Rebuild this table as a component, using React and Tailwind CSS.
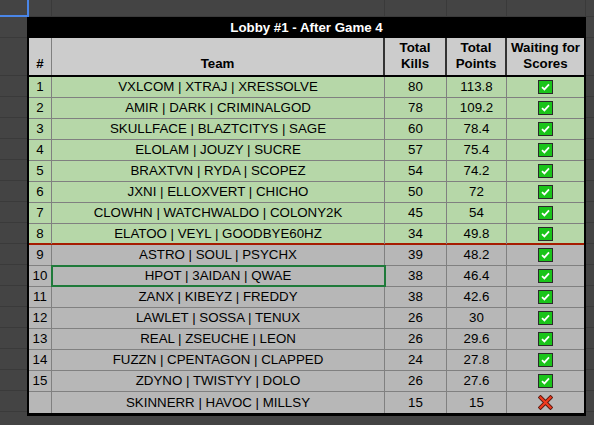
import React from 'react';

const rows = [
  { rank: '1', team: 'VXLCOM | XTRAJ | XRESSOLVE', kills: 80, points: 113.8, ok: true },
  { rank: '2', team: 'AMIR | DARK | CRIMINALGOD', kills: 78, points: 109.2, ok: true },
  { rank: '3', team: 'SKULLFACE | BLAZTCITYS | SAGE', kills: 60, points: 78.4, ok: true },
  { rank: '4', team: 'ELOLAM | JOUZY | SUCRE', kills: 57, points: 75.4, ok: true },
  { rank: '5', team: 'BRAXTVN | RYDA | SCOPEZ', kills: 54, points: 74.2, ok: true },
  { rank: '6', team: 'JXNI | ELLOXVERT | CHICHO', kills: 50, points: 72, ok: true },
  { rank: '7', team: 'CLOWHN | WATCHWALDO | COLONY2K', kills: 45, points: 54, ok: true },
  { rank: '8', team: 'ELATOO | VEYL | GOODBYE60HZ', kills: 34, points: 49.8, ok: true },
  { rank: '9', team: 'ASTRO | SOUL | PSYCHX', kills: 39, points: 48.2, ok: true },
  { rank: '10', team: 'HPOT | 3AIDAN | QWAE', kills: 38, points: 46.4, ok: true },
  { rank: '11', team: 'ZANX | KIBEYZ | FREDDY', kills: 38, points: 42.6, ok: true },
  { rank: '12', team: 'LAWLET | SOSSA | TENUX', kills: 26, points: 30, ok: true },
  { rank: '13', team: 'REAL | ZSEUCHE | LEON', kills: 26, points: 29.6, ok: true },
  { rank: '14', team: 'FUZZN | CPENTAGON | CLAPPED', kills: 24, points: 27.8, ok: true },
  { rank: '15', team: 'ZDYNO | TWISTYY | DOLO', kills: 26, points: 27.6, ok: true },
  { rank: '', team: 'SKINNERR | HAVOC | MILLSY', kills: 15, points: 15, ok: false },
];

const Check = () => (
  <span className="w-[15px] h-[14px] bg-[#1ac41a] border border-[#2a2a2a] flex items-center justify-center">
    <svg width="11" height="10" viewBox="0 0 11 10">
      <path d="M2 5.2 L4.4 7.4 L9 2.4" fill="none" stroke="#fff" strokeWidth="1.8" />
    </svg>
  </span>
);

const Cross = () => (
  <svg width="15" height="15" viewBox="0 0 15 15">
    <path d="M2.5 2.5 L12.5 12.5 M12.5 2.5 L2.5 12.5" stroke="#5a1a10" strokeWidth="4" strokeLinecap="square" />
    <path d="M2.5 2.5 L12.5 12.5 M12.5 2.5 L2.5 12.5" stroke="#f03a1e" strokeWidth="2.2" strokeLinecap="square" />
  </svg>
);

const gutterRows = [21, 38, ...Array(16).fill(21), 21];

const Gutter = ({ className }) => (
  <div className={className}>
    {gutterRows.map((h, i) => (
      <div key={i} style={{ height: h }} className="border-b border-[#3a3a3a]" />
    ))}
  </div>
);

export default function App() {
  return (
    <div className="w-[594px] h-[425px] bg-[#444444] overflow-hidden font-['Liberation_Sans',Arial,sans-serif] text-[13.3px] text-black">
      {/* sheet top row */}
      <div className="flex h-[17px]">
        <div className="w-[29px] h-[17px] border-r-2 border-b-2 border-[#4a86e8]" />
        <div className="w-[23px] border-r border-b border-[#3a3a3a]" />
        <div className="w-[333px] border-r border-b border-[#3a3a3a]" />
        <div className="w-[62px] border-r border-b border-[#3a3a3a]" />
        <div className="w-[60px] border-r border-b border-[#3a3a3a]" />
        <div className="w-[79px] border-r border-b border-[#3a3a3a]" />
        <div className="flex-1 border-b border-[#3a3a3a]" />
      </div>

      <div className="flex">
        <Gutter className="w-[27px] shrink-0" />

        <div className="w-[559px] shrink-0 flex flex-col">
          <div className="h-[21px] bg-black text-white font-bold flex items-center justify-center">
            Lobby #1 - After Game 4
          </div>

          <div className="border-l-2 border-r-2 border-b-[3px] border-black">
            <div className="grid grid-cols-[23px_333px_62px_60px_77px] h-[39px] bg-[#cccccc] border-b-2 border-black font-bold leading-[16px] text-center">
              <div className="border-r border-[#7f7f7f] flex items-end justify-center pb-[3px]">#</div>
              <div className="border-r-2 border-[#333] flex items-end justify-center pb-[3px]">Team</div>
              <div className="border-r-2 border-[#333] flex items-end justify-center pb-[3px]">Total<br />Kills</div>
              <div className="border-r-2 border-[#333] flex items-end justify-center pb-[3px]">Total<br />Points</div>
              <div className="flex items-end justify-center pb-[3px]">Waiting for<br />Scores</div>
            </div>

            {rows.map((r, i) => {
              const bg = i < 8 ? 'bg-[#b6d7a8]' : 'bg-[#b7b7b7]';
              const line =
                i === 7
                  ? 'border-b-2 border-[#a61c00]'
                  : i === rows.length - 1
                  ? ''
                  : 'border-b border-[#808080]';
              return (
                <div
                  key={i}
                  className={`grid grid-cols-[23px_333px_62px_60px_77px] h-[21px] ${bg} ${line}`}
                >
                  <div className="border-r border-[#808080] flex items-center justify-center">{r.rank}</div>
                  <div
                    className={`border-r border-[#808080] flex items-center justify-center ${
                      r.rank === '10' ? 'outline-2 outline-[#1f7a3a] -outline-offset-1' : ''
                    }`}
                  >
                    {r.team}
                  </div>
                  <div className="border-r border-[#808080] flex items-center justify-center">{r.kills}</div>
                  <div className="border-r border-[#808080] flex items-center justify-center">{r.points}</div>
                  <div className="flex items-center justify-center">
                    {r.ok ? <Check /> : <Cross />}
                  </div>
                </div>
              );
            })}
          </div>
        </div>

        <Gutter className="flex-1" />
      </div>
    </div>
  );
}
